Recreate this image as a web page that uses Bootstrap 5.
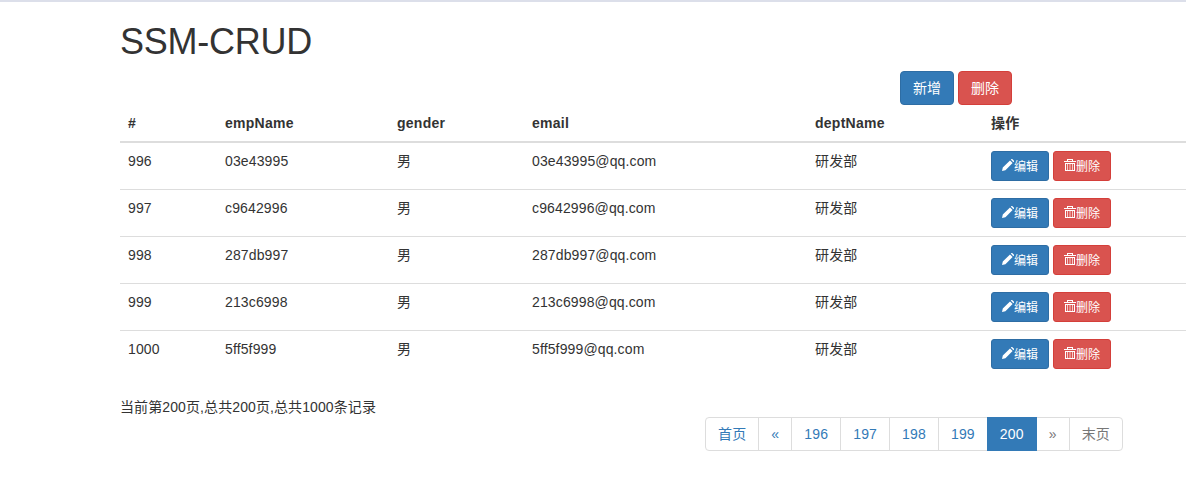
<!DOCTYPE html>
<html lang="zh">
<head>
<meta charset="utf-8">
<title>SSM-CRUD</title>
<link href="https://cdn.jsdelivr.net/npm/bootstrap@5.3.0/dist/css/bootstrap.min.css" rel="stylesheet">
<style>
html,body{height:490px;overflow:hidden}
body{font-family:"Liberation Sans","Noto Sans CJK SC",sans-serif;font-size:14px;line-height:20px;color:#333;background:#fff;border-top:2px solid #dcdfea}
.shell{padding-left:120px}
.page-title{font-family:inherit;font-size:36px;font-weight:500;line-height:40px;letter-spacing:-.25px;color:#333;margin:20px 0 9px}
.top-actions{padding-left:780px}
.btn{--bs-btn-font-size:14px;--bs-btn-line-height:20px;--bs-btn-padding-x:12px;--bs-btn-padding-y:6px;--bs-btn-border-radius:4px}
.btn-sm{--bs-btn-font-size:12px;--bs-btn-line-height:18px;--bs-btn-padding-x:10px;--bs-btn-padding-y:5px;--bs-btn-border-radius:3px;display:inline-flex;align-items:center;white-space:nowrap;padding-top:6px;padding-bottom:4px;letter-spacing:0}
.btn-primary{--bs-btn-bg:#337ab7;--bs-btn-border-color:#2e6da4;--bs-btn-color:#fff}
.btn-danger{--bs-btn-bg:#d9534f;--bs-btn-border-color:#d43f3a;--bs-btn-color:#fff}
.btn svg{width:12px;height:12px;flex:none;fill:currentColor;margin-top:-4px}
.emp-table{table-layout:fixed;width:1066px;margin:0;--bs-table-color:#333;--bs-table-border-color:#ddd;--bs-table-bg:transparent}
.emp-table>*>*>*{padding:8px;line-height:20px;border-bottom:1px solid #ddd;vertical-align:top;box-shadow:none;letter-spacing:.13px}
.emp-table>thead>tr>th{border-bottom:2px solid #ddd;font-weight:700;height:37px;padding-bottom:7px;letter-spacing:.25px}
.emp-table>tbody>tr>td{height:47px}
.emp-table>tbody>tr:last-child>td{border-bottom:0;height:46px}
.w-id{width:97px}.w-name{width:172px}.w-gender{width:135px}.w-email{width:283px}.w-dept{width:176px}
.row-acts{display:flex;gap:4px}
.page-info{margin:20px 0 0;letter-spacing:.1px}
.pager-wrap{display:flex;justify-content:flex-end;padding-right:63px}
.pagination{--bs-pagination-font-size:14px;--bs-pagination-padding-x:12px;--bs-pagination-padding-y:6px;--bs-pagination-color:#337ab7;--bs-pagination-border-color:#ddd;--bs-pagination-border-radius:4px;--bs-pagination-active-bg:#337ab7;--bs-pagination-active-border-color:#337ab7;--bs-pagination-disabled-color:#777;--bs-pagination-disabled-bg:#fff;--bs-pagination-disabled-border-color:#ddd;margin:0}
.page-link{line-height:20px;letter-spacing:.17px}
</style>
</head>
<body>
<svg width="0" height="0" class="position-absolute" aria-hidden="true">
<symbol id="i-pencil" viewBox="0 0 12 12"><path d="M0 12 .8 8.6 8 1.4 10.6 4 3.4 11.2ZM8.8.6 9.6 0H10.2L12 1.8V2.4L11.4 3.2Z"/></symbol>
<symbol id="i-trash" viewBox="0 0 12 12"><path d="M3 0H9V2H12V3H0V2H3ZM4 1V2H8V1ZM1 4H11V12H1ZM2 5V11H10V5Z" fill-rule="evenodd"/><path d="M3 5H4V11H3ZM5.5 5H6.5V11H5.5ZM8 5H9V11H8Z" opacity=".7"/></symbol>
</svg>
<div class="shell">
  <h1 class="page-title">SSM-CRUD</h1>
  <div class="top-actions d-flex gap-1">
    <button type="button" class="btn btn-primary">新增</button>
    <button type="button" class="btn btn-danger">删除</button>
  </div>
  <table class="table emp-table">
    <thead>
      <tr><th class="w-id">#</th><th class="w-name">empName</th><th class="w-gender">gender</th><th class="w-email">email</th><th class="w-dept">deptName</th><th>操作</th></tr>
    </thead>
    <tbody>
      <tr><td>996</td><td>03e43995</td><td>男</td><td>03e43995@qq.com</td><td>研发部</td><td><div class="row-acts"><button type="button" class="btn btn-primary btn-sm"><svg><use href="#i-pencil"/></svg>编辑</button><button type="button" class="btn btn-danger btn-sm"><svg><use href="#i-trash"/></svg>删除</button></div></td></tr>
      <tr><td>997</td><td>c9642996</td><td>男</td><td>c9642996@qq.com</td><td>研发部</td><td><div class="row-acts"><button type="button" class="btn btn-primary btn-sm"><svg><use href="#i-pencil"/></svg>编辑</button><button type="button" class="btn btn-danger btn-sm"><svg><use href="#i-trash"/></svg>删除</button></div></td></tr>
      <tr><td>998</td><td>287db997</td><td>男</td><td>287db997@qq.com</td><td>研发部</td><td><div class="row-acts"><button type="button" class="btn btn-primary btn-sm"><svg><use href="#i-pencil"/></svg>编辑</button><button type="button" class="btn btn-danger btn-sm"><svg><use href="#i-trash"/></svg>删除</button></div></td></tr>
      <tr><td>999</td><td>213c6998</td><td>男</td><td>213c6998@qq.com</td><td>研发部</td><td><div class="row-acts"><button type="button" class="btn btn-primary btn-sm"><svg><use href="#i-pencil"/></svg>编辑</button><button type="button" class="btn btn-danger btn-sm"><svg><use href="#i-trash"/></svg>删除</button></div></td></tr>
      <tr><td>1000</td><td>5ff5f999</td><td>男</td><td>5ff5f999@qq.com</td><td>研发部</td><td><div class="row-acts"><button type="button" class="btn btn-primary btn-sm"><svg><use href="#i-pencil"/></svg>编辑</button><button type="button" class="btn btn-danger btn-sm"><svg><use href="#i-trash"/></svg>删除</button></div></td></tr>
    </tbody>
  </table>
  <p class="page-info">当前第200页,总共200页,总共1000条记录</p>
  <nav class="pager-wrap">
    <ul class="pagination">
      <li class="page-item"><a class="page-link" href="#">首页</a></li>
      <li class="page-item"><a class="page-link" href="#">«</a></li>
      <li class="page-item"><a class="page-link" href="#">196</a></li>
      <li class="page-item"><a class="page-link" href="#">197</a></li>
      <li class="page-item"><a class="page-link" href="#">198</a></li>
      <li class="page-item"><a class="page-link" href="#">199</a></li>
      <li class="page-item active"><a class="page-link" href="#">200</a></li>
      <li class="page-item disabled"><a class="page-link" href="#">»</a></li>
      <li class="page-item disabled"><a class="page-link" href="#">末页</a></li>
    </ul>
  </nav>
</div>
</body>
</html>
